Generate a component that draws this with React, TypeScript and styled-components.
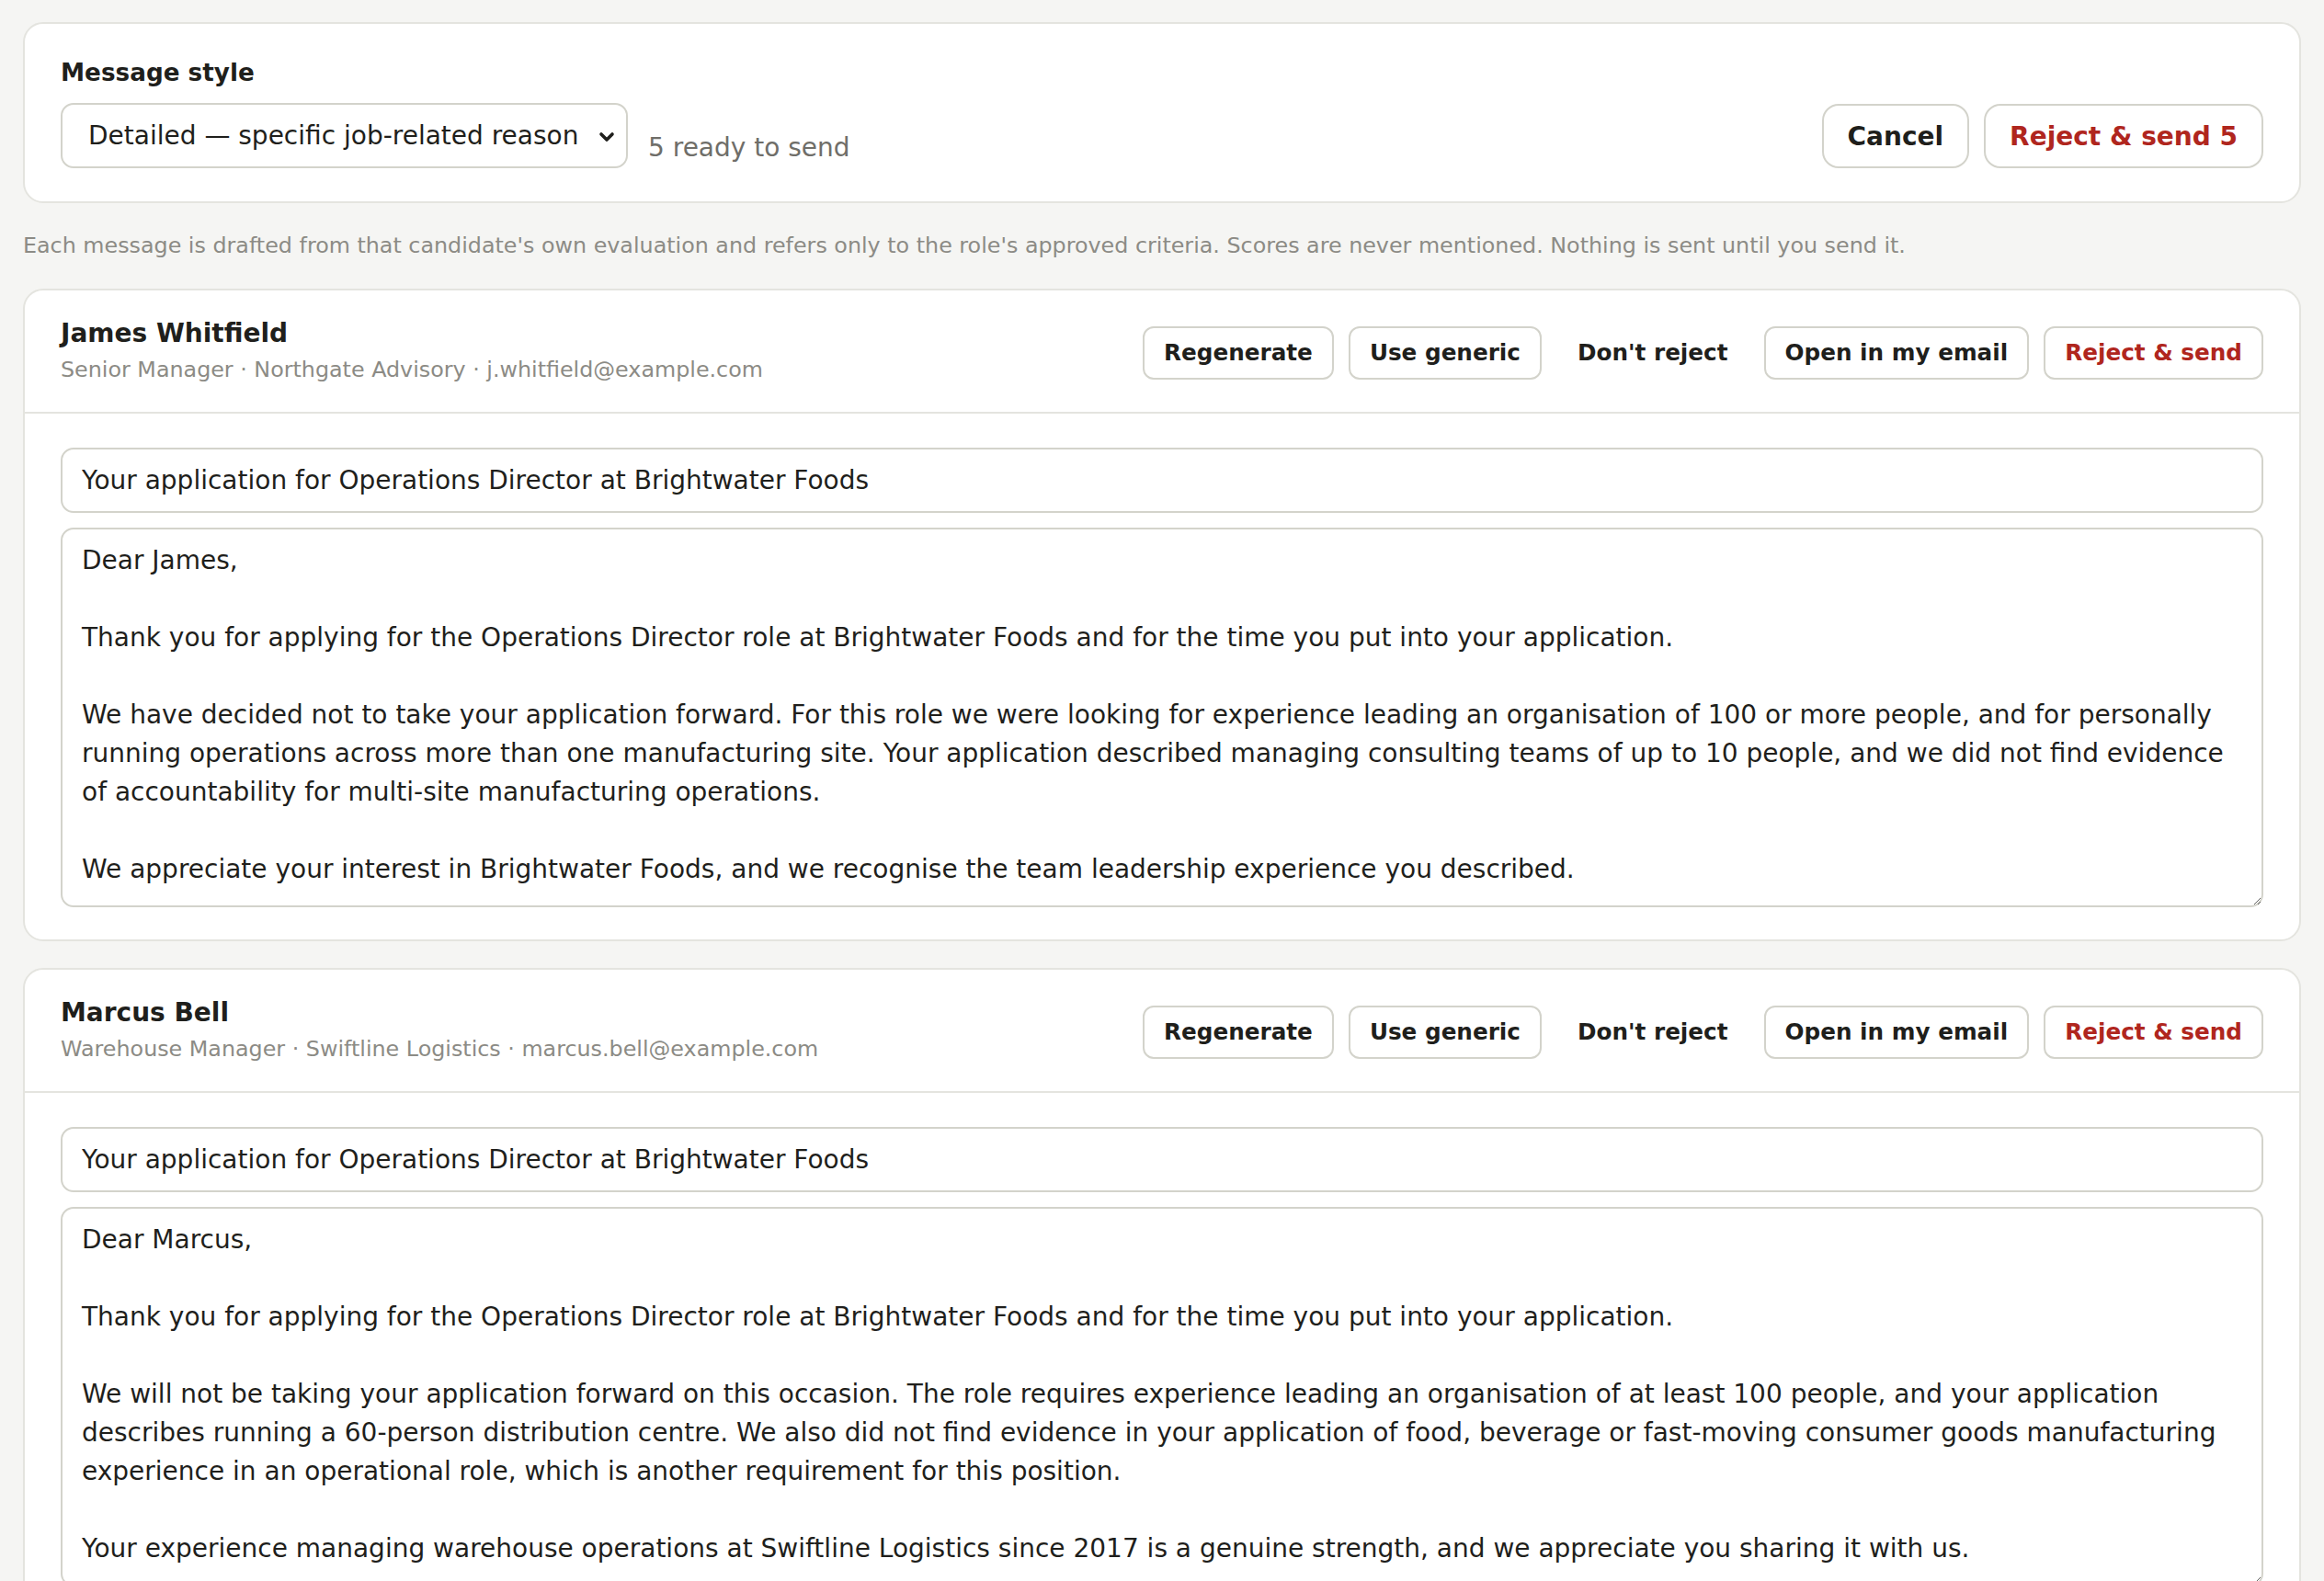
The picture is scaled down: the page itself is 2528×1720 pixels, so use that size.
import styled, { createGlobalStyle } from "styled-components";

const GlobalStyle = createGlobalStyle`
    html, body {
        margin: 0;
        padding: 0;
        background: #f5f5f3;
        font-family: "DejaVu Sans", "Noto Sans", sans-serif;
        color: #1f1f1c;
    }
    * {
        box-sizing: border-box;
    }
`;

interface Candidate {
    name: string;
    title: string;
    company: string;
    email: string;
    subject: string;
    body: string;
}

const candidates: Candidate[] = [
    {
        name: "James Whitfield",
        title: "Senior Manager",
        company: "Northgate Advisory",
        email: "j.whitfield@example.com",
        subject: "Your application for Operations Director at Brightwater Foods",
        body: [
            "Dear James,",
            "Thank you for applying for the Operations Director role at Brightwater Foods and for the time you put into your application.",
            "We have decided not to take your application forward. For this role we were looking for experience leading an organisation of 100 or more people, and for personally running operations across more than one manufacturing site. Your application described managing consulting teams of up to 10 people, and we did not find evidence of accountability for multi-site manufacturing operations.",
            "We appreciate your interest in Brightwater Foods, and we recognise the team leadership experience you described.",
        ].join("\n\n"),
    },
    {
        name: "Marcus Bell",
        title: "Warehouse Manager",
        company: "Swiftline Logistics",
        email: "marcus.bell@example.com",
        subject: "Your application for Operations Director at Brightwater Foods",
        body: [
            "Dear Marcus,",
            "Thank you for applying for the Operations Director role at Brightwater Foods and for the time you put into your application.",
            "We will not be taking your application forward on this occasion. The role requires experience leading an organisation of at least 100 people, and your application describes running a 60-person distribution centre. We also did not find evidence in your application of food, beverage or fast-moving consumer goods manufacturing experience in an operational role, which is another requirement for this position.",
            "Your experience managing warehouse operations at Swiftline Logistics since 2017 is a genuine strength, and we appreciate you sharing it with us.",
        ].join("\n\n"),
    },
];

const readyCount = 5;

const StyledPage = styled.div`
    padding: 24px 25px 0;
    display: flex;
    flex-direction: column;
`;

const StyledCard = styled.section`
    background: #ffffff;
    border: 2px solid #e4e4df;
    border-radius: 22px;
`;

const StyledStyleCard = styled(StyledCard)`
    padding: 38px 39px 36px;
    display: flex;
    justify-content: space-between;
    align-items: flex-end;
`;

const StyledLabel = styled.label`
    display: block;
    font-size: 26.25px;
    font-weight: 700;
    margin-bottom: 18px;
`;

const StyledRow = styled.div`
    display: flex;
    align-items: center;
    gap: 22px;
`;

const StyledSelectWrap = styled.div`
    position: relative;
    display: flex;
`;

const StyledSelect = styled.select`
    appearance: none;
    font-family: inherit;
    font-size: 28px;
    color: #1f1f1c;
    height: 71px;
    width: 617px;
    padding: 0 50px 0 28px;
    border: 2px solid #d3d3cb;
    border-radius: 14px;
    background: #ffffff;
`;

const StyledChevron = styled.svg`
    position: absolute;
    right: 14px;
    top: 50%;
    width: 18px;
    height: 12px;
    margin-top: -5px;
    pointer-events: none;
`;

const StyledReady = styled.span`
    font-size: 28px;
    color: #6f6e69;
    padding-top: 26px;
`;

const StyledActions = styled.div`
    display: flex;
    gap: 16px;
`;

const StyledButton = styled.button<{ $danger?: boolean; $ghost?: boolean; $large?: boolean }>`
    font-family: inherit;
    font-weight: 700;
    font-size: ${props => props.$large ? '28px' : '24.7px'};
    height: ${props => props.$large ? '70px' : '58px'};
    padding: ${props => props.$large ? '0 26px' : '0 21px'};
    border-radius: ${props => props.$large ? '18px' : '12px'};
    border: 2px solid ${props => props.$ghost ? 'transparent' : '#d3d3cb'};
    background: ${props => props.$ghost ? 'transparent' : '#ffffff'};
    color: ${props => props.$danger ? '#b0261e' : '#1f1f1c'};
    white-space: nowrap;
    cursor: pointer;
`;

const StyledHint = styled.p`
    margin: 32px 0 33px;
    font-size: 23.8px;
    color: #8c8b85;
`;

const StyledList = styled.div`
    display: flex;
    flex-direction: column;
    gap: 29px;
`;

const StyledCardHeader = styled.header`
    display: flex;
    justify-content: space-between;
    align-items: center;
    padding: 30px 39px 27px;
    border-bottom: 2px solid #e4e4df;
`;

const StyledPerson = styled.div`
    padding-bottom: 5px;
`;

const StyledName = styled.h3`
    margin: 0;
    font-size: 28px;
    font-weight: 700;
`;

const StyledMeta = styled.p`
    margin: 9px 0 0;
    font-size: 23.8px;
    color: #8c8b85;
`;

const StyledCardBody = styled.div`
    padding: 37px 39px 35px;
    display: flex;
    flex-direction: column;
    gap: 16px;
`;

const StyledSubject = styled.input`
    font-family: inherit;
    font-size: 28px;
    color: #1f1f1c;
    height: 71px;
    padding: 0 21px;
    border: 2px solid #d3d3cb;
    border-radius: 14px;
    width: 100%;
`;

const StyledMessage = styled.textarea`
    font-family: inherit;
    font-size: 28px;
    line-height: 42px;
    color: #1f1f1c;
    height: 413px;
    padding: 13px 21px;
    border: 2px solid #d3d3cb;
    border-radius: 14px;
    width: 100%;
    resize: vertical;
`;

function CandidateCard({ candidate }: { candidate: Candidate }) {
    return (
        <StyledCard>
            <StyledCardHeader>
                <StyledPerson>
                    <StyledName>{candidate.name}</StyledName>
                    <StyledMeta>
                        {`${candidate.title} · ${candidate.company} · ${candidate.email}`}
                    </StyledMeta>
                </StyledPerson>
                <StyledActions>
                    <StyledButton>Regenerate</StyledButton>
                    <StyledButton>Use generic</StyledButton>
                    <StyledButton $ghost>Don't reject</StyledButton>
                    <StyledButton>Open in my email</StyledButton>
                    <StyledButton $danger>Reject &amp; send</StyledButton>
                </StyledActions>
            </StyledCardHeader>
            <StyledCardBody>
                <StyledSubject defaultValue={candidate.subject} />
                <StyledMessage defaultValue={candidate.body} />
            </StyledCardBody>
        </StyledCard>
    );
}

export default function App() {
    return (
        <>
            <GlobalStyle />
            <StyledPage>
                <StyledStyleCard>
                    <div>
                        <StyledLabel htmlFor="message-style">Message style</StyledLabel>
                        <StyledRow>
                            <StyledSelectWrap>
                                <StyledSelect id="message-style" defaultValue="detailed">
                                    <option value="detailed">Detailed — specific job-related reason</option>
                                    <option value="brief">Brief — short and polite</option>
                                    <option value="generic">Generic — no reason given</option>
                                </StyledSelect>
                                <StyledChevron viewBox="0 0 18 12" aria-hidden="true">
                                    <path d="M3 3 L9 9 L15 3" fill="none" stroke="#1f1f1c" strokeWidth="3.6" strokeLinecap="round" strokeLinejoin="round" />
                                </StyledChevron>
                            </StyledSelectWrap>
                            <StyledReady>{readyCount} ready to send</StyledReady>
                        </StyledRow>
                    </div>
                    <StyledActions>
                        <StyledButton $large>Cancel</StyledButton>
                        <StyledButton $large $danger>Reject &amp; send {readyCount}</StyledButton>
                    </StyledActions>
                </StyledStyleCard>
                <StyledHint>
                    Each message is drafted from that candidate's own evaluation and refers only to the role's approved criteria. Scores are never mentioned. Nothing is sent until you send it.
                </StyledHint>
                <StyledList>
                    {candidates.map(candidate => (
                        <CandidateCard key={candidate.email} candidate={candidate} />
                    ))}
                </StyledList>
            </StyledPage>
        </>
    );
}
